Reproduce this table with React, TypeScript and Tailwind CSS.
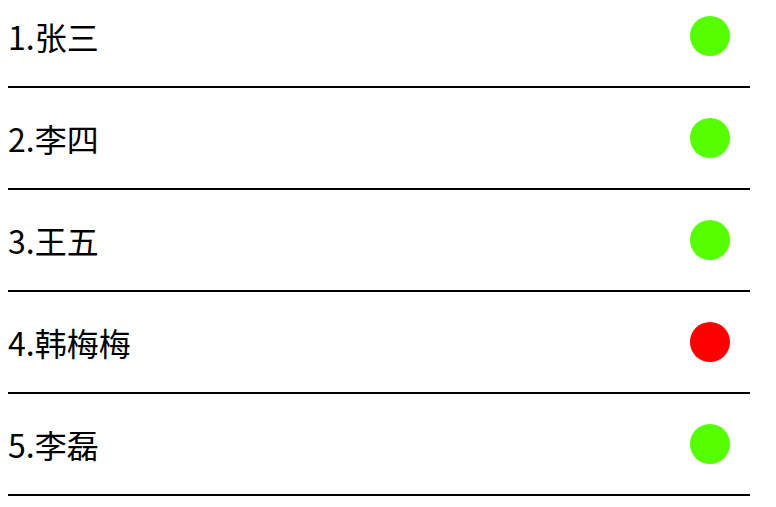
import React from 'react';

const people = [
  { name: '张三', online: true },
  { name: '李四', online: true },
  { name: '王五', online: true },
  { name: '韩梅梅', online: false },
  { name: '李磊', online: true },
];

export default function App() {
  return (
    <div
      className="bg-white text-black w-[776px] h-[507px] overflow-hidden"
      style={{ fontFamily: '"Noto Sans CJK SC", "Noto Sans", sans-serif' }}
    >
      <ul className="ml-2 w-[742px] -mt-[14px]">
        {people.map((p, i) => (
          <li
            key={i}
            className="flex items-center justify-between h-[102px] border-b-2 border-black"
          >
            <span className="text-[32px] leading-none">
              {i + 1}.{p.name}
            </span>
            <span
              className={
                'w-10 h-10 rounded-full mr-5 ' + (p.online ? 'bg-[#55ff00]' : 'bg-[#ff0000]')
              }
            />
          </li>
        ))}
      </ul>
    </div>
  );
}
